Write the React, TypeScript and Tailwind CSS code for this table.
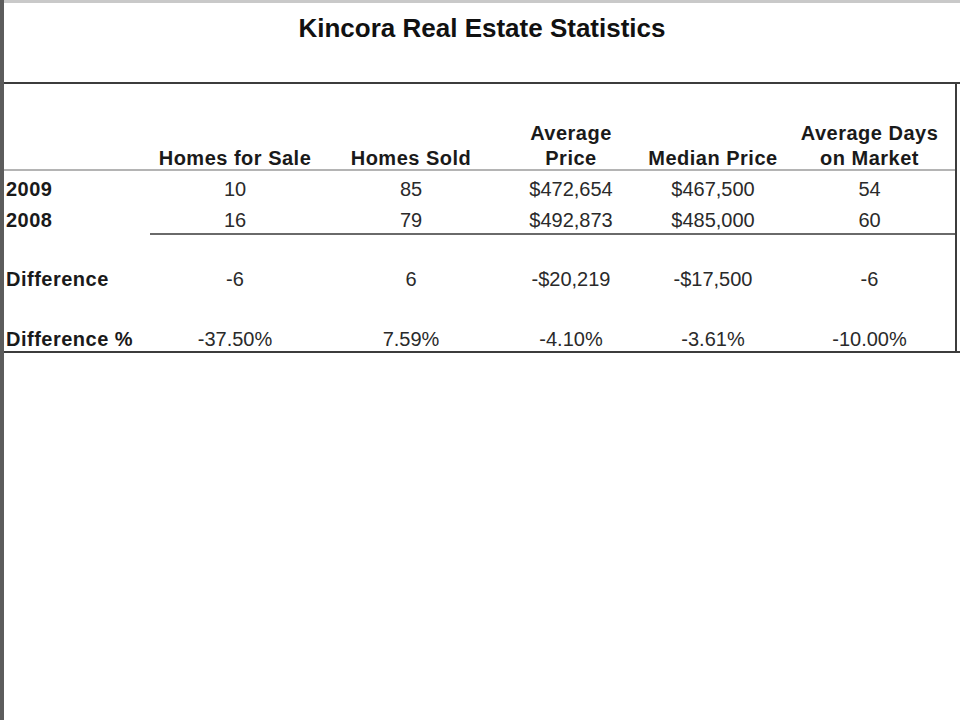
const headers = [
  ["Homes for Sale"],
  ["Homes Sold"],
  ["Average", "Price"],
  ["Median Price"],
  ["Average Days", "on Market"],
];

const years = [
  { label: "2009", values: ["10", "85", "$472,654", "$467,500", "54"], cls: "h-[32px] pt-[6px]" },
  { label: "2008", values: ["16", "79", "$492,873", "$485,000", "60"], cls: "h-[30px] pt-[5px]" },
];

const diffs = [
  { label: "Difference", values: ["-6", "6", "-$20,219", "-$17,500", "-6"], pt: "pt-[32px]" },
  { label: "Difference %", values: ["-37.50%", "7.59%", "-4.10%", "-3.61%", "-10.00%"], pt: "pt-[36px]" },
];

const cols = "grid grid-cols-[142px_174px_178px_142px_142px_171px]";

export default function App() {
  return (
    <div
      className="h-[720px] w-[960px] bg-white border-l-4 border-[#5c5c5c] overflow-hidden"
      style={{ fontFamily: '"Liberation Sans", Arial, sans-serif' }}
    >
      <div className="h-[3px] bg-[#c9c9c9]" />
      <div className="h-[79px] pt-[10px] text-center text-[26px] font-bold leading-[30px] text-[#111]">
        Kincora Real Estate Statistics
      </div>
      <div className="border-t-2 border-b-2 border-[#3c3c3c]">
        <div className="w-[953px] border-r-2 border-[#3c3c3c]">
          {/* header */}
          <div className={`${cols} h-[87px] items-end pl-[2px] border-b-2 border-[#b4b4b4]`}>
            <div />
            {headers.map((lines, i) => (
              <div
                key={i}
                className="-mb-[2px] text-center text-[20px] font-bold leading-[25px] tracking-[0.5px] text-[#1a1a1a]"
              >
                {lines.map((l) => (
                  <div key={l}>{l}</div>
                ))}
              </div>
            ))}
          </div>

          {/* years */}
          {years.map((r) => (
            <div key={r.label} className={`${cols} ${r.cls} pl-[2px]`}>
              <div className="text-[20px] font-bold leading-[24px] tracking-[0.5px] text-[#1a1a1a]">
                {r.label}
              </div>
              {r.values.map((v, i) => (
                <div key={i} className="text-center text-[20px] leading-[24px] text-[#2a2a2a]">
                  {v}
                </div>
              ))}
            </div>
          ))}
          <div className="ml-[146px] h-[2px] bg-[#6a6a6a]" />

          {/* differences */}
          {diffs.map((r) => (
            <div key={r.label} className={`${cols} ${r.pt} pl-[2px]`}>
              <div className="text-[20px] font-bold leading-[24px] tracking-[0.5px] text-[#1a1a1a]">
                {r.label}
              </div>
              {r.values.map((v, i) => (
                <div key={i} className="text-center text-[20px] leading-[24px] text-[#2a2a2a]">
                  {v}
                </div>
              ))}
            </div>
          ))}
        </div>
      </div>
    </div>
  );
}
